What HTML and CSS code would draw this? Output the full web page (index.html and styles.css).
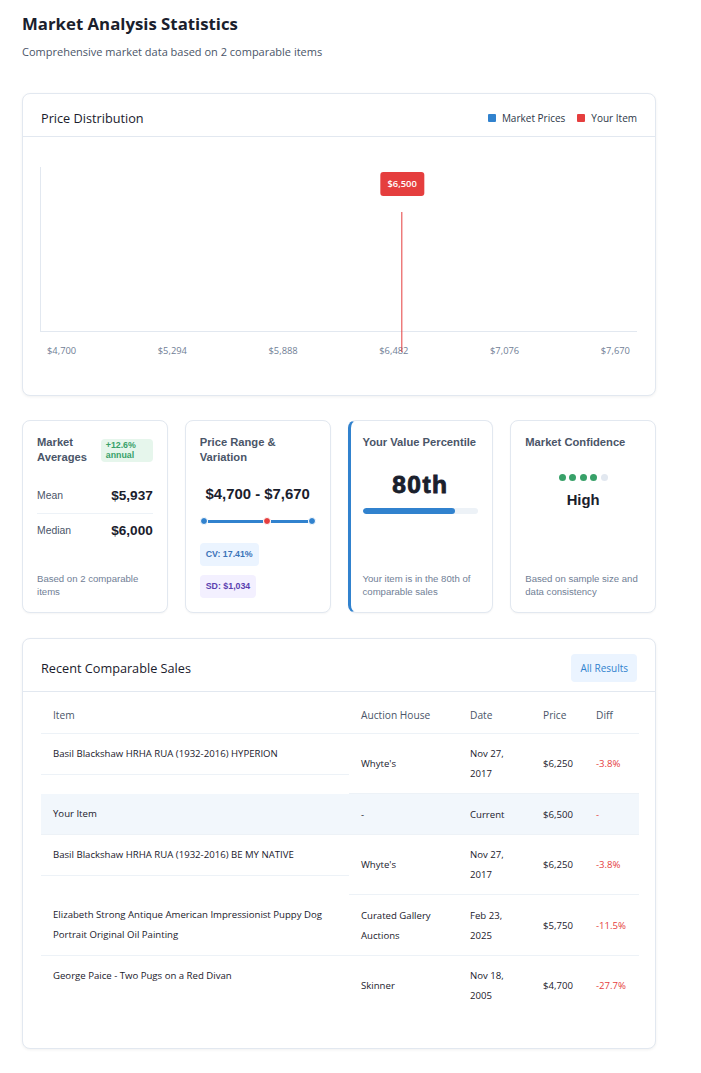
FILE: index.html
```html
<!DOCTYPE html>
<html lang="en">
<head>
<meta charset="utf-8">
<title>Market Analysis Statistics</title>
<link rel="stylesheet" href="styles.css">
</head>
<body>
<div class="page">
  <h1 class="title">Market Analysis Statistics</h1>
  <p class="subtitle">Comprehensive market data based on 2 comparable items</p>

  <section class="panel chart-panel">
    <div class="panel-head">
      <h2 class="panel-title">Price Distribution</h2>
      <div class="legend">
        <span class="legend-item"><span class="swatch swatch-blue"></span>Market Prices</span>
        <span class="legend-item"><span class="swatch swatch-red"></span>Your Item</span>
      </div>
    </div>
    <div class="chart-body">
      <div class="plot">
        <div class="marker" style="left:60.6%">
          <span class="marker-label">$6,500</span>
          <span class="marker-line"></span>
        </div>
      </div>
      <div class="axis-labels">
        <span>$4,700</span><span>$5,294</span><span>$5,888</span><span>$6,482</span><span>$7,076</span><span>$7,670</span>
      </div>
    </div>
  </section>

  <div class="stats">
    <div class="stat">
      <div class="stat-head">
        <h3 class="stat-title">Market Averages</h3>
        <span class="trend">+12.6% annual</span>
      </div>
      <div class="avg-list">
        <div class="avg-row"><span class="avg-label">Mean</span><strong class="avg-value">$5,937</strong></div>
        <div class="avg-row"><span class="avg-label">Median</span><strong class="avg-value">$6,000</strong></div>
      </div>
      <p class="note">Based on 2 comparable items</p>
    </div>

    <div class="stat">
      <h3 class="stat-title">Price Range &amp; Variation</h3>
      <div class="range-value">$4,700 - $7,670</div>
      <div class="slider">
        <span class="dot"></span>
        <span class="seg" style="flex-grow:0.606"></span>
        <span class="dot dot-red"></span>
        <span class="seg" style="flex-grow:0.394"></span>
        <span class="dot"></span>
      </div>
      <div class="chips">
        <span class="chip chip-blue">CV: 17.41%</span>
        <span class="chip chip-purple">SD: $1,034</span>
      </div>
    </div>

    <div class="stat stat-accent">
      <h3 class="stat-title">Your Value Percentile</h3>
      <div class="percentile">80th</div>
      <div class="bar"><div class="bar-fill" style="width:80%"></div></div>
      <p class="note">Your item is in the 80th of comparable sales</p>
    </div>

    <div class="stat">
      <h3 class="stat-title">Market Confidence</h3>
      <div class="conf-dots">
        <span class="cdot on"></span><span class="cdot on"></span><span class="cdot on"></span><span class="cdot on"></span><span class="cdot"></span>
      </div>
      <div class="conf-level">High</div>
      <p class="note">Based on sample size and data consistency</p>
    </div>
  </div>

  <section class="panel sales-panel">
    <div class="panel-head">
      <h2 class="panel-title">Recent Comparable Sales</h2>
      <button class="btn" type="button">All Results</button>
    </div>
    <div class="sales-body">
      <table class="sales">
        <colgroup>
          <col class="c-item"><col class="c-house"><col class="c-date"><col class="c-price"><col class="c-diff">
        </colgroup>
        <thead>
          <tr><th>Item</th><th>Auction House</th><th>Date</th><th>Price</th><th>Diff</th></tr>
        </thead>
        <tbody>
          <tr>
            <td class="item"><div class="item-text">Basil Blackshaw HRHA RUA (1932-2016) HYPERION</div></td>
            <td>Whyte's</td><td>Nov 27, 2017</td><td>$6,250</td><td class="neg">-3.8%</td>
          </tr>
          <tr class="mine">
            <td class="item"><div class="item-text">Your Item</div></td>
            <td>-</td><td>Current</td><td>$6,500</td><td class="neg">-</td>
          </tr>
          <tr>
            <td class="item"><div class="item-text">Basil Blackshaw HRHA RUA (1932-2016) BE MY NATIVE</div></td>
            <td>Whyte's</td><td>Nov 27, 2017</td><td>$6,250</td><td class="neg">-3.8%</td>
          </tr>
          <tr>
            <td class="item"><div class="item-text">Elizabeth Strong Antique American Impressionist Puppy Dog Portrait Original Oil Painting</div></td>
            <td>Curated Gallery Auctions</td><td>Feb 23, 2025</td><td>$5,750</td><td class="neg">-11.5%</td>
          </tr>
          <tr>
            <td class="item"><div class="item-text">George Paice - Two Pugs on a Red Divan</div></td>
            <td>Skinner</td><td>Nov 18, 2005</td><td>$4,700</td><td class="neg">-27.7%</td>
          </tr>
        </tbody>
      </table>
    </div>
  </section>
</div>
</body>
</html>
```

FILE: styles.css
```css
* { box-sizing: border-box; }

body {
  margin: 0;
  background: #ffffff;
  font-family: "Open Sans", "Noto Sans", sans-serif;
  color: #1a202c;
}

.page {
  width: 634px;
  margin-left: 22px;
  padding-top: 12px;
  padding-bottom: 24px;
}

.title {
  margin: 0;
  font-size: 16.8px;
  line-height: 24px;
  font-weight: 700;
  color: #1a202c;
}

.subtitle {
  margin: 8px 0 0;
  font-size: 11px;
  line-height: 16px;
  color: #4a5568;
}

.panel {
  background: #fff;
  border: 1px solid #e2e8f0;
  border-radius: 8px;
  box-shadow: 0 1px 3px rgba(0, 0, 0, 0.06);
}

.panel-head {
  display: flex;
  align-items: center;
  justify-content: space-between;
  padding: 15px 18px 9px;
  border-bottom: 1px solid #e2e8f0;
}

.panel-title {
  margin: 0;
  font-size: 12.7px;
  line-height: 18px;
  font-weight: 500;
  color: #1a202c;
}

.chart-panel { margin-top: 33px; }

.legend {
  display: flex;
  gap: 12px;
  font-size: 10px;
  color: #2d3748;
}

.legend-item {
  display: flex;
  align-items: center;
  gap: 6px;
}

.swatch {
  width: 8px;
  height: 8px;
  border-radius: 1px;
}
.swatch-blue { background: #3182ce; }
.swatch-red { background: #e53e3e; }

.chart-body {
  padding: 30px 18px 36px 17px;
}

.plot {
  position: relative;
  height: 165px;
  border-left: 1px solid #e2e8f0;
  border-bottom: 1px solid #e2e8f0;
}

.marker {
  position: absolute;
  top: 5px;
  transform: translateX(-50%);
  display: flex;
  flex-direction: column;
  align-items: center;
  z-index: 2;
}

.marker-label {
  background: #e53e3e;
  color: #fff;
  font-size: 9.4px;
  font-weight: 600;
  line-height: 24px;
  height: 24px;
  padding: 0 7px;
  border-radius: 3px;
  white-space: nowrap;
}

.marker-line {
  margin-top: 16px;
  width: 1px;
  height: 140px;
  background: #e53e3e;
}

.axis-labels {
  display: flex;
  justify-content: space-between;
  padding: 11px 7px 0;
  font-size: 9.4px;
  line-height: 16px;
  color: #718096;
}

/* Stat cards */
.stats {
  margin-top: 24px;
  display: grid;
  grid-template-columns: repeat(4, 1fr);
  gap: 17px;
}

.stat {
  display: flex;
  flex-direction: column;
  height: 193px;
  padding: 14px;
  border: 1px solid #e2e8f0;
  border-radius: 8px;
  background: #fff;
  box-shadow: 0 1px 2px rgba(0, 0, 0, 0.04);
  font-family: "Liberation Sans", Arial, sans-serif;
}

.stat-accent {
  border-left: 3px solid #3182ce;
  padding-left: 12px;
}

.stat-head {
  display: flex;
  align-items: center;
  justify-content: space-between;
  gap: 8px;
}

.stat-title {
  margin: 0;
  font-size: 11.2px;
  line-height: 15px;
  font-weight: 700;
  color: #4a5568;
}

.trend {
  flex: 0 0 52px;
  padding: 1px 5px;
  background: #e6f6ec;
  color: #38a169;
  border-radius: 4px;
  font-size: 8.8px;
  line-height: 10.5px;
  font-weight: 600;
}

.avg-list { margin-top: 14px; }

.avg-row {
  display: flex;
  align-items: center;
  justify-content: space-between;
  padding: 8px 0;
  line-height: 18px;
}
.avg-row + .avg-row { border-top: 1px solid #edf2f7; }

.avg-label {
  font-size: 10.4px;
  color: #4a5568;
}

.avg-value {
  font-size: 13.6px;
  font-weight: 700;
  color: #1a202c;
}

.note {
  margin: auto 0 0;
  font-size: 9.6px;
  line-height: 13px;
  color: #718096;
}

.range-value {
  margin-top: 20px;
  text-align: center;
  font-size: 14.9px;
  line-height: 18px;
  font-weight: 700;
  color: #1a202c;
}

.slider {
  margin-top: 14px;
  display: flex;
  align-items: center;
  height: 8px;
}

.dot {
  flex: 0 0 8px;
  height: 8px;
  border-radius: 50%;
  background: #3182ce;
  border: 1px solid #fff;
}
.dot-red { background: #e53e3e; }

.seg {
  flex-basis: 0;
  height: 3px;
  background: #3182ce;
}

.chips {
  margin-top: auto;
  display: flex;
  flex-direction: column;
  align-items: flex-start;
  gap: 9px;
}

.chip {
  padding: 6px 6px;
  border-radius: 4px;
  font-size: 8.8px;
  line-height: 11px;
  font-weight: 700;
}
.chip-blue { background: #ebf4ff; color: #3b73b9; }
.chip-purple { background: #f3f0ff; color: #5a3fb0; }

.percentile {
  margin-top: 21px;
  text-align: center;
  font-size: 24.5px;
  line-height: 28px;
  font-weight: 700;
  letter-spacing: 1.5px;
  -webkit-text-stroke: 0.9px #1a202c;
  color: #1a202c;
}

.bar {
  margin-top: 9px;
  height: 6px;
  border-radius: 3px;
  background: #edf2f7;
  overflow: hidden;
}

.bar-fill {
  height: 100%;
  border-radius: 3px;
  background: #3182ce;
}

.conf-dots {
  margin-top: 24px;
  display: flex;
  justify-content: center;
  gap: 3.5px;
}

.cdot {
  width: 7px;
  height: 7px;
  border-radius: 50%;
  background: #e2e8f0;
}
.cdot.on { background: #38a169; }

.conf-level {
  margin-top: 10px;
  text-align: center;
  font-size: 14.8px;
  line-height: 18px;
  font-weight: 700;
  color: #1a202c;
}

/* Sales table */
.sales-panel {
  margin-top: 25px;
  padding-bottom: 33px;
}

.btn {
  height: 28px;
  padding: 0 9px;
  border: none;
  border-radius: 4px;
  background: #ebf4ff;
  color: #3182ce;
  font-family: inherit;
  font-size: 10px;
}

.sales-body {
  padding: 5px 18px 0;
}

.sales {
  width: 100%;
  border-collapse: collapse;
  table-layout: fixed;
  font-size: 9.6px;
  line-height: 20px;
}

.c-item { width: 308px; }
.c-house { width: 109px; }
.c-date { width: 73px; }
.c-price { width: 53px; }
.c-diff { width: 55px; }

.sales th {
  padding: 8px 12px;
  text-align: left;
  font-weight: 400;
  font-size: 10.2px;
  color: #4a5568;
  border-bottom: 1px solid #edf2f7;
}

.sales td {
  padding: 10px 12px 9px;
  vertical-align: middle;
  color: #1a202c;
  border-bottom: 1px solid #edf2f7;
}

.sales td.item {
  padding: 0;
  vertical-align: top;
  border-bottom: none;
}

.item-text {
  padding: 10px 12px;
  border-bottom: 1px solid #edf2f7;
}

.sales tbody tr:last-child td,
.sales tbody tr:last-child .item-text { border-bottom: none; }

.sales tr.mine td { background: #f2f7fc; }

.sales td.neg { color: #e53e3e; }
```
